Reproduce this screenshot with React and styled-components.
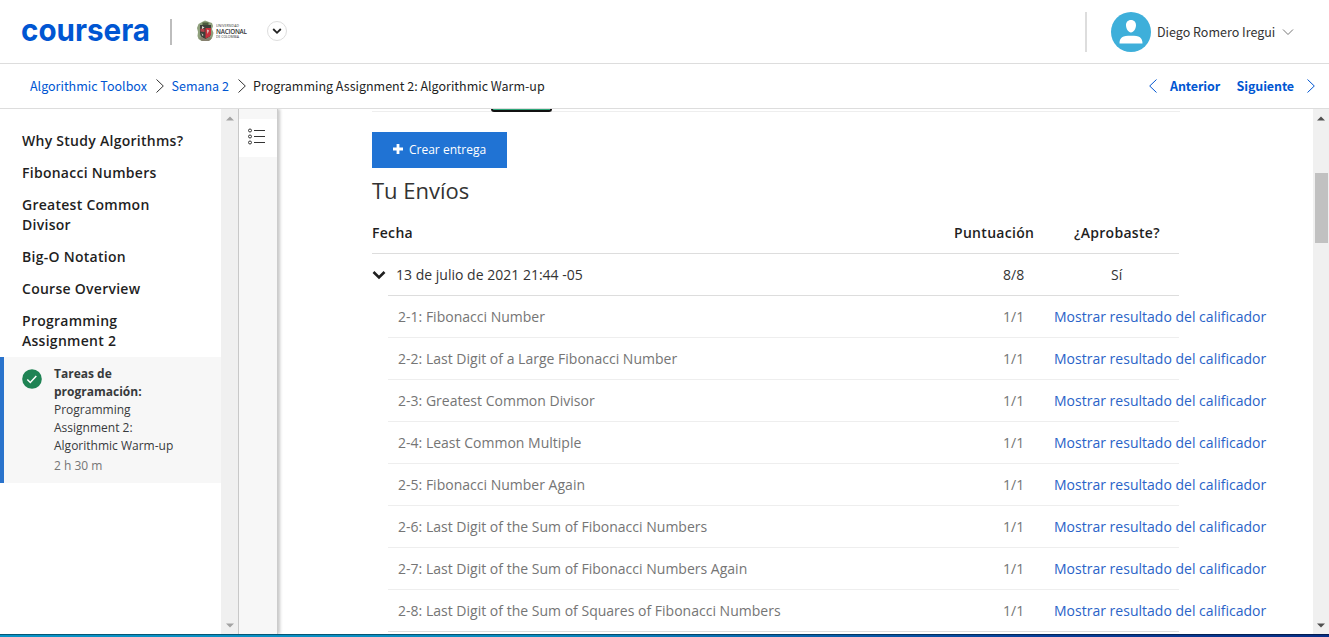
import React from 'react';
import styled, { createGlobalStyle } from 'styled-components';

const Global = createGlobalStyle`
  * { box-sizing: border-box; }
  body { margin: 0; background: #fff; overflow: hidden; font-family: "Open Sans", sans-serif; font-size: 14px; color: #1f1f1f; }
  a { color: inherit; text-decoration: none; }
`;

const source = '"Noto Sans CJK SC", sans-serif';

const Page = styled.div`
  display: flex;
  flex-direction: column;
  width: 1329px;
  height: 637px;
`;
const Header = styled.header`
  display: flex;
  align-items: center;
  height: 64px;
  flex: none;
  padding-left: 20px;
  border-bottom: 1px solid #ddd;
`;
const Wordmark = styled.svg`
  display: block;
  width: 134px;
  height: 48px;
  margin-right: 16px;
  overflow: visible;
  text {
    font-family: Inter, sans-serif;
    font-weight: 700;
    font-size: 31.5px;
    fill: #0056d2;
  }
`;
const Bar = styled.span`
  width: 2px;
  height: ${(p) => p.$h}px;
  background: ${(p) => p.$color};
`;
const Partner = styled.div`
  display: flex;
  align-items: center;
  margin: -2px 0 0 25px;
  width: 70px;
  svg { flex: none; }
`;
const PartnerName = styled.svg`
  display: block;
  margin-left: 2px;
  width: 32px;
  height: 20px;
  text { font-family: "Open Sans", sans-serif; fill: #333; }
`;
const RoundButton = styled.button`
  display: flex;
  align-items: center;
  justify-content: center;
  width: 20px;
  height: 20px;
  margin: -2px 0 0;
  padding: 0;
  border: 1px solid #ddd;
  border-radius: 50%;
  background: #fff;
`;
const Account = styled.div`
  display: flex;
  align-items: center;
  margin-left: auto;
  margin-right: 35px;
  svg { display: block; flex: none; }
`;
const Avatar = styled.svg`
  width: 40px;
  height: 40px;
  margin-left: 24px;
`;
const UserName = styled.span`
  width: 118px;
  margin: 0 7px 0 6px;
  font: 12.5px/20px ${source};
  white-space: nowrap;
  color: #333;
`;
const Crumbs = styled.nav`
  display: flex;
  align-items: center;
  height: 45px;
  flex: none;
  padding: 0 14px 0 30px;
  border-bottom: 1px solid #ddd;
  font: 12.5px/20px ${source};
  white-space: nowrap;
  svg { display: block; flex: none; }
`;
const Crumb = styled.span`
  width: ${(p) => p.$w}px;
  margin-left: ${(p) => p.$gap || 0}px;
  color: ${(p) => (p.$current ? '#1f1f1f' : '#0056d2')};
`;
const Pager = styled.div`
  display: flex;
  align-items: center;
  margin-left: auto;
  color: #0056d2;
  font-weight: 700;
  letter-spacing: -0.1px;
`;
const PagerLink = styled.a`
  width: ${(p) => p.$w}px;
  margin-left: ${(p) => p.$gap || 0}px;
`;
const Body = styled.div`
  display: flex;
  flex: 1;
  min-height: 0;
`;
const Lessons = styled.aside`
  width: 221px;
  padding-top: 22px;
`;
const Lesson = styled.div`
  padding: 0 30px 0 22px;
  margin-bottom: 12px;
  font-weight: 600;
  line-height: 20px;
  letter-spacing: 0.27px;
`;
const ActiveItem = styled.div`
  display: flex;
  height: 126px;
  margin-top: -6px;
  padding: 8px 0 0 18px;
  border-left: 4px solid #2a73cc;
  background: #f7f7f7;
  svg { display: block; flex: none; margin-top: 4px; }
`;
const ItemText = styled.div`
  width: 130px;
  margin-left: 12px;
  font-size: 12px;
  line-height: 18px;
  color: #373a3c;
`;
const ItemKind = styled.div`
  font-weight: 700;
  width: 100px;
`;
const Duration = styled.div`
  margin-top: 2px;
  color: #757575;
`;
const Scroll = styled.div`
  display: flex;
  flex-direction: column;
  justify-content: space-between;
  align-items: center;
  flex: none;
  width: ${(p) => p.$w}px;
  padding: 7px 0 6px;
  background: #f0f0f0;
`;
const Thumb = styled.div`
  width: 13px;
  height: 70px;
  margin: 52px 0 auto 1px;
  background: #c1c1c1;
`;
const Rail = styled.div`
  flex: none;
  width: 40px;
  padding-top: 10px;
  border-left: 1px solid #c8c8c8;
  border-right: 1px solid #ccc;
  background: #f7f7f7;
  box-shadow: 2px 0 3px rgba(0, 0, 0, 0.22);
  clip-path: inset(0 -6px 0 0);
`;
const RailButton = styled.div`
  display: flex;
  height: 38px;
  padding: 9px 0 0 8px;
  background: #fff;
`;
const Main = styled.main`
  flex: 1;
  min-width: 0;
  padding-left: 94px;
`;
const TabLine = styled.div`
  height: 3px;
  width: 808px;
  padding-left: 119px;
  border-bottom: 1px solid #eee;
`;
const ActiveTab = styled.div`
  width: 61px;
  height: 3px;
  border: 2px solid #111;
  border-top: 0;
  border-radius: 0 0 4px 4px;
  background: #2ea77a;
`;
const CreateButton = styled.button`
  display: flex;
  align-items: center;
  width: 135px;
  height: 36px;
  margin-top: 20px;
  padding: 0 0 0 21px;
  border: 0;
  background: #2073d4;
  color: #fff;
  font: 12px/18px "Open Sans", sans-serif;
  svg { margin: -3px 6px 0 0; }
`;
const Title = styled.h2`
  margin: 7px 0 0;
  font-size: 22px;
  line-height: 30px;
  font-weight: 400;
  color: #333;
`;
const Table = styled.div`
  width: 807px;
  margin-top: 7px;
`;
const Row = styled.div`
  display: flex;
  align-items: center;
  height: 42px;
  margin-left: ${(p) => (p.$head ? 0 : 16)}px;
  padding-left: ${(p) => (p.$nested ? 10 : 0)}px;
  border-bottom: 1px solid ${(p) => p.$line || '#eee'};
  font-weight: ${(p) => (p.$head ? 600 : 400)};
  letter-spacing: ${(p) => (p.$head ? 0.3 : 0.01)}px;
  color: ${(p) => (p.$nested ? '#757575' : p.$head ? '#1f1f1f' : '#333')};
  white-space: nowrap;
`;
const DateCell = styled.div`
  display: flex;
  align-items: center;
  flex: 1;
  svg { flex: none; margin: 0 10px 0 -16px; }
`;
const ScoreCell = styled.div`
  width: ${(p) => p.$w}px;
`;
const PassCell = styled.div`
  width: ${(p) => p.$w}px;
`;
const ResultLink = styled.a`
  width: 125px;
  color: #2a63c8;
`;
const Taskbar = styled.div`
  flex: none;
  height: 3px;
  border-top: 1px solid rgba(0, 0, 0, 0.4);
  background: linear-gradient(90deg, #0993c6, #0a8cc0 40%, #07409a 78%, #072f86) border-box;
`;

const Chevron = ({ w, h, d, color, sw = 1 }) => (
  <svg width={w} height={h} viewBox={`0 0 ${w} ${h}`} fill="none" stroke={color} strokeWidth={sw}><path d={d} /></svg>
);
const Next = ({ color }) => <Chevron w={8} h={14} d="M.5 .5L7.3 7L.5 13.5" color={color} />;
const Arrow = ({ up, color }) => (
  <svg width="8" height="5" viewBox="0 0 8 5"><path d={up ? 'M0 4.5h8L4 .5z' : 'M0 .5h8L4 4.5z'} fill={color} /></svg>
);
const Crest = () => (
  <svg width="17" height="22" viewBox="0 0 17 22">
    <path d="M5 2l3-1.500 4 1.500 3 1 1 3-1 3 1.500 4-1 4-2 3-4 1-5 0-3-2-1-3 .5-4-1-4 1.500-4z" fill="#8fa07c" />
    <path d="M3 5h11v8c0 3-2 5-5.500 6C5 18 3 16 3 13z" fill="#3d403a" />
    <path d="M8.500 8H14v5.500c0 2-2 4-5.500 5z" fill="#c9303c" />
    <path d="M3.500 8.500l4 .5v3l-4-.5z" fill="#b5414a" />
    <path d="M5 6l2.500 1.500L5 9zM10 9.500l2 1-1.500 3.500zM4.500 13l2 2-1 1z" fill="#dcd8d0" />
    <path d="M5.500 2.500h6v2.500h-6z" fill="#4b5a3d" />
    <path d="M2 18l3-1 3.500 2.500L12 17l3 1-3 3H5z" fill="#86806f" />
  </svg>
);

const tasks = [
  '2-1: Fibonacci Number',
  '2-2: Last Digit of a Large Fibonacci Number',
  '2-3: Greatest Common Divisor',
  '2-4: Least Common Multiple',
  '2-5: Fibonacci Number Again',
  '2-6: Last Digit of the Sum of Fibonacci Numbers',
  '2-7: Last Digit of the Sum of Fibonacci Numbers Again',
  '2-8: Last Digit of the Sum of Squares of Fibonacci Numbers',
];
const lessons = ['Why Study Algorithms?', 'Fibonacci Numbers', 'Greatest Common Divisor', 'Big-O Notation', 'Course Overview', 'Programming Assignment 2'];

export default function App() {
  return (
    <Page>
      <Global />
      <Header>
        <Wordmark><text x="1" y="32.5" textLength="129" lengthAdjust="spacingAndGlyphs">coursera</text></Wordmark>
        <Bar $h={26} $color="#bdbdbd" />
        <Partner>
          <Crest />
          <PartnerName>
            <text x="0" y="5.5" fontSize="3.5" textLength="23">UNIVERSIDAD</text>
            <text x="0" y="12.500" fontSize="6.3" fontWeight="600" textLength="31">NACIONAL</text>
            <text x="0" y="17" fontSize="3.5" textLength="23">DE COLOMBIA</text>
          </PartnerName>
        </Partner>
        <RoundButton><Chevron w={10} h={8} d="M1.2 2L5 5.8L8.8 2" color="#222" sw={1.8} /></RoundButton>
        <Account>
          <Bar $h={40} $color="#ddd" />
          <Avatar viewBox="0 0 40 40">
            <circle cx="20" cy="20" r="20" fill="#3eafda" />
            <path d="M20 8c3.2 0 5.2 2.4 5 5.6-.2 3.400-2.300 6.900-5 6.900s-4.800-3.500-5-6.900C14.800 10.400 16.800 8 20 8zM8.500 31.500c0-6 3-7.700 11.500-7.700s11.500 1.700 11.500 7.700z" fill="#fff" />
          </Avatar>
          <UserName>Diego Romero Iregui</UserName>
          <Chevron w={12} h={8} d="M1 1.500L6 6.500L11 1.500" color="#777" />
        </Account>
      </Header>
      <Crumbs>
        <Crumb $w={126}>Algorithmic Toolbox</Crumb>
        <Next color="#333" />
        <Crumb $w={66} $gap={7.500}>Semana 2</Crumb>
        <Next color="#333" />
        <Crumb $current $w={300} $gap={7.500}>Programming Assignment 2: Algorithmic Warm-up</Crumb>
        <Pager>
          <Chevron w={8} h={14} d="M7.500 .5L.7 7L7.500 13.500" color="#0056d2" />
          <PagerLink $w={66.5} $gap={13}>Anterior</PagerLink>
          <PagerLink $w={70.5}>Siguiente</PagerLink>
          <Next color="#0056d2" />
        </Pager>
      </Crumbs>
      <Body>
        <Lessons>
          {lessons.map((l) => <Lesson key={l}>{l}</Lesson>)}
          <ActiveItem>
            <svg width="20" height="20" viewBox="0 0 20 20">
              <circle cx="10" cy="10" r="9.800" fill="#1f8354" />
              <path d="M5.300 10.500l3 3 6-6.500" fill="none" stroke="#fff" strokeWidth="1.500" />
            </svg>
            <ItemText>
              <ItemKind>Tareas de programación:</ItemKind>
              <div>Programming<br />Assignment 2:<br />Algorithmic Warm-up</div>
              <Duration>2 h 30 m</Duration>
            </ItemText>
          </ActiveItem>
        </Lessons>
        <Scroll $w={17}><Arrow up color="#a3a3a3" /><Arrow color="#a3a3a3" /></Scroll>
        <Rail>
          <RailButton>
            <svg width="18" height="18" viewBox="0 0 18 18" fill="none" stroke="#333">
              <circle cx="3" cy="2.500" r="1.500" /><circle cx="3" cy="8.500" r="1.500" /><circle cx="3" cy="14.500" r="1.500" />
              <path d="M7 2.500H18M7 8.500H18M7 14.500H18" />
            </svg>
          </RailButton>
        </Rail>
        <Main>
          <TabLine><ActiveTab /></TabLine>
          <CreateButton>
            <svg width="10" height="10" viewBox="0 0 10 10"><path d="M5 0v10M0 5h10" stroke="#fff" strokeWidth="2.800" /></svg>
            Crear entrega
          </CreateButton>
          <Title>Tu Envíos</Title>
          <Table>
            <Row $head $line="#ddd">
              <DateCell>Fecha</DateCell>
              <ScoreCell $w={120}>Puntuación</ScoreCell>
              <PassCell $w={105}>¿Aprobaste?</PassCell>
            </Row>
            <Row $line="#ddd">
              <DateCell><Chevron w={14} h={10} d="M1.500 2L7 7.500L12.500 2" color="#1f1f1f" sw={2.6} />13 de julio de 2021 21:44 -05</DateCell>
              <ScoreCell $w={108}>8/8</ScoreCell>
              <PassCell $w={68}>Sí</PassCell>
            </Row>
            {tasks.map((t, i) => (
              <Row key={t} $nested $line={i === 7 ? '#ddd' : '#eee'}>
                <DateCell>{t}</DateCell>
                <ScoreCell $w={51}>1/1</ScoreCell>
                <ResultLink>Mostrar resultado del calificador</ResultLink>
              </Row>
            ))}
          </Table>
        </Main>
        <Scroll $w={16}><Arrow up color="#505050" /><Thumb /><Arrow color="#505050" /></Scroll>
      </Body>
      <Taskbar />
    </Page>
  );
}
